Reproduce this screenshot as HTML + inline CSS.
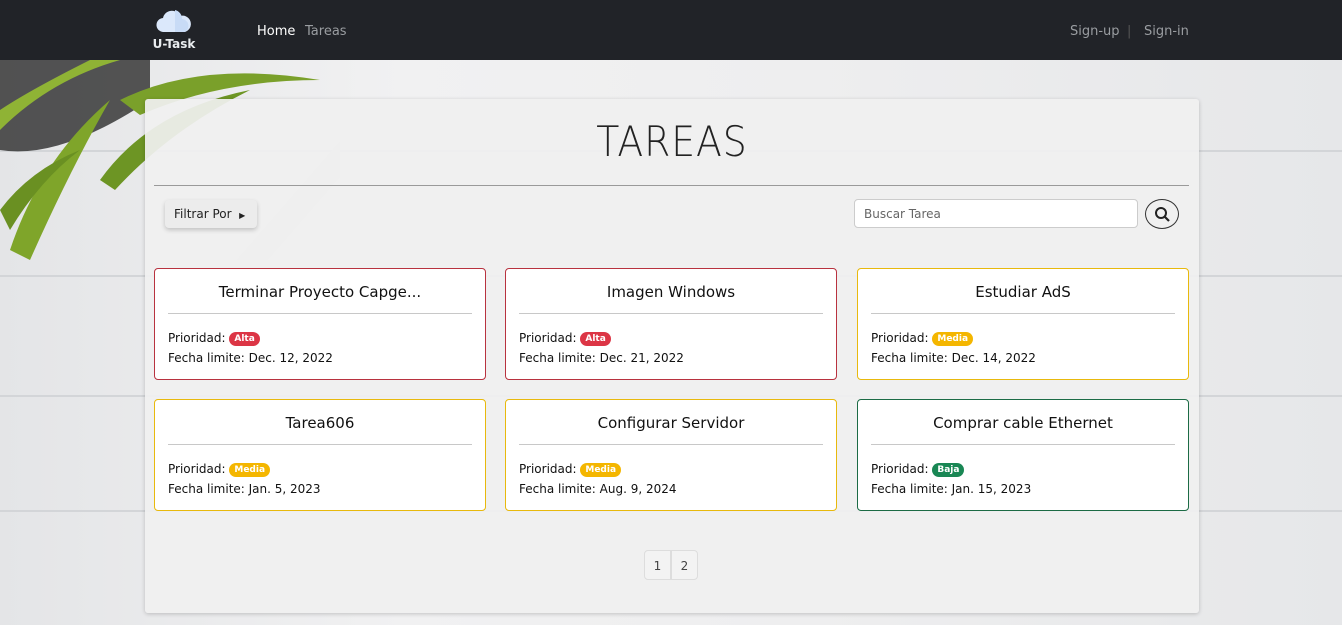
<!DOCTYPE html>
<html><head><meta charset="utf-8"><style>
*{box-sizing:border-box;margin:0;padding:0}
body{width:1342px;height:625px;overflow:hidden;font-family:"DejaVu Sans","Liberation Sans",sans-serif;position:relative;
background:linear-gradient(90deg,#e4e5e7 0%,#f1f1f2 30%,#eeeeef 60%,#e6e7e9 100%);}
.bgplank{position:absolute;left:0;right:0;height:2px;background:#d3d5d8}
nav{position:absolute;top:0;left:0;width:1342px;height:60px;background:#212328}
.logo{position:absolute;left:148px;top:10px;color:#e9ecef;font-size:12px;font-weight:bold;width:52px;text-align:center;white-space:nowrap;line-height:14px}
.nl{position:absolute;top:24px;font-size:13px;color:#9a9da1}
.plant{position:absolute;left:0;top:60px;width:340px;height:200px;}
.panel{position:absolute;left:145px;top:99px;width:1054px;height:514px;background:rgba(240,240,240,0.93);border-radius:3px;box-shadow:0 1px 4px rgba(0,0,0,.2)}
h1{position:absolute;left:0;width:1054px;top:18px;text-align:center;font-weight:200;font-size:42px;color:#222;font-family:"DejaVu Sans",sans-serif;letter-spacing:1px;transform:scaleX(.9)}
.hr{position:absolute;left:9px;width:1035px;top:86px;height:1px;background:#9a9a9a}
.filter{position:absolute;left:20px;top:101px;width:92px;height:28px;background:#ececec;border-radius:4px;box-shadow:0 2px 5px rgba(0,0,0,.2);font-size:12px;color:#222;padding:7px 9px}
.search{position:absolute;left:709px;top:100px;width:284px;height:29px;background:#fff;border:1px solid #ccc;border-radius:4px;font-size:12px;color:#666;padding:7px 9px}
.sb{position:absolute;left:1000px;top:100px;width:34px;height:30px;border:1px solid #333;border-radius:50%}
.card{position:absolute;width:332px;height:112px;background:#fff;border:1px solid;border-radius:4px}
.card h3{position:absolute;top:14px;left:0;width:100%;text-align:center;font-weight:normal;font-size:15px;color:#111}
.card .l{position:absolute;left:13px;right:13px;top:44px;height:1px;background:#c8c8c8}
.card .p{position:absolute;left:13px;top:62px;font-size:12px;color:#111}
.card .f{position:absolute;left:13px;top:82px;font-size:12px;color:#111}
.b{display:inline-block;font-size:9px;font-weight:bold;color:#fff;border-radius:8px;padding:2px 5px;vertical-align:1px}
.r{border-color:#b8323f}.y{border-color:#e8b90d}.g{border-color:#1c6b45}
.br{background:#dc3545}.by{background:#f4b600}.bg{background:#198754}
.pg{position:absolute;top:451px;height:30px;width:27px;background:#f3f3f3;border:1px solid #ddd;font-size:12px;text-align:center;padding-top:8px;color:#444}
</style></head><body>
<div class="bgplank" style="top:150px"></div><div class="bgplank" style="top:275px"></div><div class="bgplank" style="top:395px"></div><div class="bgplank" style="top:510px"></div>
<svg class="plant" viewBox="0 0 340 200">
<path d="M0 0h150v40Q60 100 0 90Z" fill="#2c2c2c" opacity=".8"/>
<path d="M10 190 Q40 100 110 40 Q70 110 30 200Z" fill="#7fa52a"/>
<path d="M0 70 Q50 20 120 0 L90 0 Q30 30 0 50Z" fill="#8fb335"/>
<path d="M100 120 Q150 50 250 30 Q170 70 115 130Z" fill="#6d9524"/>
<path d="M120 40 Q200 0 320 20 Q220 20 140 55Z" fill="#7aa02a"/>
<path d="M0 150 Q30 110 80 90 Q40 120 10 170Z" fill="#6a9022"/>
<path d="M400 30 L200 260" stroke="#ddd" stroke-width="24" opacity=".6"/>
</svg>
<nav>
<div class="logo"><svg width="36" height="22" viewBox="0 0 36 22"><path d="M8 22a7 7 0 0 1-1-14 9 9 0 0 1 17-2 7 7 0 0 1 5 16z" fill="#dbe8fb"/><path d="M19 0v22h10a7 7 0 0 0-3-13 9 9 0 0 0-7-9z" fill="#c8dbf6"/></svg><div style="margin-top:2px">U-Task</div></div>
<div class="nl" style="left:257px;color:#fff">Home</div><div class="nl" style="left:305px">Tareas</div>
<div class="nl" style="left:1070px">Sign-up</div><div class="nl" style="left:1127px;color:#555">|</div><div class="nl" style="left:1144px">Sign-in</div>
</nav>
<div class="panel">
<h1>TAREAS</h1><div class="hr"></div>
<div class="filter">Filtrar Por &nbsp;<span style="font-size:8px">▶</span></div>
<div class="search">Buscar Tarea</div>
<div class="sb"><svg width="32" height="28" viewBox="0 0 32 28"><circle cx="15" cy="13" r="5" fill="none" stroke="#222" stroke-width="2"/><path d="M19 17l4 4" stroke="#222" stroke-width="2.2"/></svg></div>
<div class="card r" style="left:9px;top:169px"><h3>Terminar Proyecto Capge...</h3><div class="l"></div><div class="p">Prioridad: <span class="b br">Alta</span></div><div class="f">Fecha limite: Dec. 12, 2022</div></div>
<div class="card r" style="left:360px;top:169px"><h3>Imagen Windows</h3><div class="l"></div><div class="p">Prioridad: <span class="b br">Alta</span></div><div class="f">Fecha limite: Dec. 21, 2022</div></div>
<div class="card y" style="left:712px;top:169px"><h3>Estudiar AdS</h3><div class="l"></div><div class="p">Prioridad: <span class="b by">Media</span></div><div class="f">Fecha limite: Dec. 14, 2022</div></div>
<div class="card y" style="left:9px;top:300px"><h3>Tarea606</h3><div class="l"></div><div class="p">Prioridad: <span class="b by">Media</span></div><div class="f">Fecha limite: Jan. 5, 2023</div></div>
<div class="card y" style="left:360px;top:300px"><h3>Configurar Servidor</h3><div class="l"></div><div class="p">Prioridad: <span class="b by">Media</span></div><div class="f">Fecha limite: Aug. 9, 2024</div></div>
<div class="card g" style="left:712px;top:300px"><h3>Comprar cable Ethernet</h3><div class="l"></div><div class="p">Prioridad: <span class="b bg">Baja</span></div><div class="f">Fecha limite: Jan. 15, 2023</div></div>
<div class="pg" style="left:499px;border-radius:4px 0 0 4px">1</div><div class="pg" style="left:526px;border-radius:0 4px 4px 0">2</div>
</div>
</body></html>
